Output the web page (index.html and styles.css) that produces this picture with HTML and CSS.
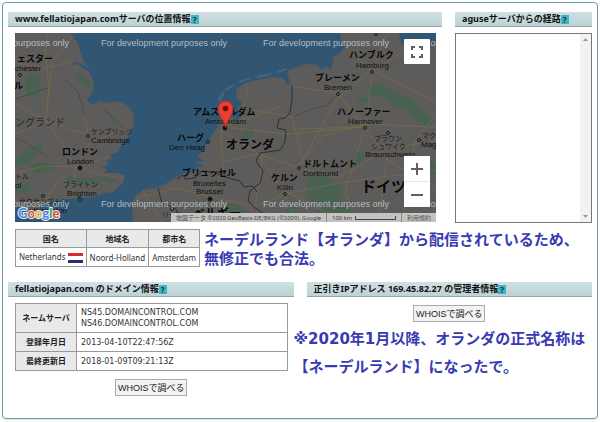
FILE: index.html
```html
<!DOCTYPE html>
<html lang="ja">
<head>
  <meta charset="UTF-8" />
  <title>aguse.jp</title>
  <meta name="viewport" content="width=device-width, initial-scale=1.0" />
  <link rel="stylesheet" href="styles.css">
</head>
<body>
  <main class="frame">

    <!-- Server location + route -->
    <div class="row row-top">
      <section>
        <h2 class="bar">www.fellatiojapan.comサーバの位置情報<a class="help" href="#help">?</a></h2>
        <div class="content">
          <div class="map">
            <svg class="map-art" viewBox="0 0 421 189" preserveAspectRatio="xMidYMid slice">
              <rect class="sea" width="421" height="189" />
              <path class="shoal" d="M203 66l5-8 1 4-4 7zM210 56l8-5 1 2-8 5zM224 48l12-4v2l-11 4zM242 43l14-3v2l-13 3zM262 38l10-3v2l-9 3z" />

              <!-- land -->
              <path class="land" d="M0 0H55L63 10 65 17 67 25 74 36 68 31 60 29 54 32 62 31 71 37 75 40 79 50 78 58 72 67 77 72 85 68 94 70 102 68 112 72 119 82 118 94 112 105 107 110 103 119 95 122 98 126 91 127 94 131 87 135 92 136 89 140 102 140 110 142 108 150 98 159 90 160 78 164 62 165 45 167 36 170 28 172 22 178 12 177 8 173 0 174Z" />
              <path class="land" d="M118 189L117 172 120 163 128 157 145 154 162 144 170 140 178 138 188 139 180 135 189 133 179 129 190 128 182 124 187 118 192 110 202 94 208 77 213 67 218 72 215 82 222 87 228 82 222 77 227 70 221 64 222 56 230 50 242 47 258 44 268 45 272 51 276 52 274 46 272 40 275 36 282 34 292 31 302 32 306 38 311 33 315 37 318 30 318 24 325 20 330 14 326 6 325 0H384L386 10 393 17 402 10 412 13 421 9V189Z" />

              <!-- woods -->
              <g class="woods">
                <path d="M60 39l8 3 8 9 1 7-6-4-9-9zM11 46l7-5 7 4 1 12-7 9-7-4-2-9zM0 128l9-10 14-8 5 2-7 11-11 9-10 2zM14 133l14-4 16 3-11 7-14 1zM48 142l20 4 19-2 6 4-20 4-18-3zM90 143l12 4-8 3zM97 86l5 3-2 5-4-4zM0 153l10-2 8 6-18 4z" />
                <path d="M352 55l14-4 12 8 17 5 9 12 14 8-4 11-11-5-9-12-15-4-9-10-15-1zM228 100l8-5 4 4-6 8-7-1zM292 146l11-5 16 6 8 14-6 10-18 1-12-8zM338 122l9-5 3 8-9 9zM270 178l9-5 5 9-8 5zM300 178l25-6 15 7-18 8zM390 128l16-5 15 8v11l-19-7zM202 176l14-6 17 8-13 9zM342 66l9-2 2 5-8 3z" />
              </g>

              <!-- roads -->
              <g class="roads">
                <path d="M33 0l-3 20 4 33-3 35 18 25 12 22M0 30l30 5 28-7M31 88l-31 13M61 0l-24 28-6 60M0 140l30-7 31 1 27 8 20 3M61 134l-4 31M61 134l14-24 28-12M73 103l-4-27M28 172l12-20 21-18M0 70l31 18 42 14M61 135l33-12" />
                <path d="M121 165l40-10 34 9 45 9 31-12 42-9 53-8 55-6M195 164l13-28-2-40 21-9 41-14M206 98l35 21 27 39 15 31M208 129l34-8 40 13 26-31 42-12 71 3M210 94l63 7 77-7M232 76l45 8 12 48M284 134l38-68 35-29 63 31M357 39l-6 54-29-33-48-7M350 94l23 33 47 29M270 158l57 30M284 135l40 10 49-30 48-7M195 165l-24 24M195 166l26 23M330 13l27 26 15-39M357 39l31-21M350 94l-20 65 14 30M240 173l8-53M302 33l21 28 29 37M373 116l-10 73M128 158l19 31M233 51l-6 37M277 96l73-2M388 189l12-81 21-27" />
              </g>
              <path class="minor" d="M48 45l15 14 7 23M33 55l-33 11M280 83l20-8 12-2 7-10M88 75l20 20M3 105l29 18" />

              <!-- borders -->
              <path class="border" d="M277 52v15l-2 13-5 5-6 1-2 9 9 2-1 12-5 8-20 3-4 8 7 10-3 12-10 8-2 10 7 7 8 5v9M162 146l6-4 2 4 10-1 7-7 12 1 8 4 10 3 8 2 4 6 9-1 4 6M143 155l4 15 14 6 5 13" />

              <!-- place marks -->
              <g class="dots">
                <circle cx="5" cy="42" r="1.5" /><circle cx="73" cy="103" r="1.5" />
                <circle cx="28" cy="163" r="1.5" /><circle cx="65" cy="167" r="1.5" />
                <circle cx="193" cy="109" r="1.5" /><circle cx="357" cy="39" r="1.5" />
                <circle cx="323" cy="61" r="1.5" /><circle cx="350" cy="95" r="1.5" />
                <circle cx="373" cy="100" r="1.5" /><circle cx="404" cy="107" r="1.5" />
                <circle cx="284" cy="135" r="1.5" /><circle cx="270" cy="161" r="1.5" />
                <circle cx="157" cy="176" r="1.5" /><circle cx="361" cy="1" r="1.5" />
                <circle class="capital" cx="65" cy="135" r="2" />
                <circle class="capital" cx="210" cy="95" r="2" />
                <circle class="capital" cx="195" cy="166" r="2" />
              </g>

              <g class="city">
                <text x="2" y="29">ェスター</text>
                <text x="-1" y="56">ル</text>
                <text x="47" y="122">ロンドン</text>
                <text x="178" y="82">アムステルダム</text>
                <text x="162" y="108">ハーグ</text>
                <text x="167" y="143">ブリュッセル</text>
                <text x="334" y="25">ハンブルク</text>
                <text x="300" y="48">ブレーメン</text>
                <text x="322" y="82">ハノーファー</text>
                <text x="288" y="134">ドルトムント</text>
                <text x="256" y="148">ケルン</text>
              </g>
              <g class="town">
                <text x="76" y="101">ケンブリッジ</text>
                <text x="48" y="154">ブライトン</text>
                <text x="4" y="171">サウサンプトン</text>
                <text x="0" y="146">トル</text>
                <text x="359" y="108">ブラウン</text>
                <text x="356" y="116">シュワイク</text>
                <text x="407" y="105">マク</text>
                <text x="147" y="184">リール</text>
              </g>
              <g class="latin">
                <text x="0" y="38">chester</text>
                <text x="76" y="110">Cambridge</text>
                <text x="52" y="131">London</text>
                <text x="52" y="163">Brighton</text>
                <text x="14" y="180">uthampton</text>
                <text x="0" y="155">ol</text>
                <text x="190" y="91">Amsterdam</text>
                <text x="154" y="117">Den Haag</text>
                <text x="178" y="153">Bruxelles</text>
                <text x="181" y="161">Brussel</text>
                <text x="341" y="35">Hamburg</text>
                <text x="309" y="57">Bremen</text>
                <text x="333" y="91">Hannover</text>
                <text x="350" y="124">Braunschweig</text>
                <text x="406" y="114">Mag</text>
                <text x="288" y="143">Dortmund</text>
                <text x="262" y="157">Köln</text>
              </g>
              <text class="region" x="0" y="93">ングランド</text>
              <text class="country" x="211" y="116">オランダ</text>
              <text class="country" x="178" y="185">ベルギー</text>
              <text class="country large" x="346" y="159">ドイツ</text>

              <g class="watermark">
                <text x="-72" y="13">For development purposes only</text>
                <text x="86" y="13">For development purposes only</text>
                <text x="248" y="13">For development purposes only</text>
                <text x="410" y="13">For development purposes only</text>
                <text x="-72" y="174">For development purposes only</text>
                <text x="86" y="174">For development purposes only</text>
                <text x="248" y="174">For development purposes only</text>
                <text x="410" y="174">For development purposes only</text>
              </g>

              <path class="pin" d="M210.500 94.500C209.500 87 203 83 203 75.500a7.500 7.500 0 0 1 15 0C218 83 211.500 87 210.500 94.500Z" />
              <circle class="pin-hole" cx="210.500" cy="75.500" r="2.800" />

              <text class="google" x="3" y="185"><tspan class="g-blue">G</tspan><tspan class="g-red">o</tspan><tspan class="g-yellow">o</tspan><tspan class="g-blue">g</tspan><tspan class="g-green">l</tspan><tspan class="g-red">e</tspan></text>
            </svg>

            <button class="map-btn fullscreen" type="button" aria-label="全画面表示">
              <svg width="12" height="12" viewBox="0 0 12 12"><path d="M1 4V1H4M8 1H11V4M11 8V11H8M4 11H1V8" /></svg>
            </button>
            <div class="zoom">
              <button class="map-btn" type="button" aria-label="拡大">
                <svg width="12" height="12" viewBox="0 0 12 12"><path d="M6 0V12M0 6H12" /></svg>
              </button>
              <button class="map-btn" type="button" aria-label="縮小">
                <svg width="12" height="12" viewBox="0 0 12 12"><path d="M0 6H12" /></svg>
              </button>
            </div>
            <div class="credits">
              <span>地図データ ©2020 GeoBasis-DE/BKG (©2009), Google</span>
              <span class="scale">100 km <i></i></span>
              <a href="#terms">利用規約</a>
            </div>
          </div>

          <div class="place">
            <table class="grid place-table">
              <tr><th>国名</th><th>地域名</th><th>都市名</th></tr>
              <tr>
                <td>Netherlands <span class="flag"></span></td>
                <td>Noord-Holland</td>
                <td>Amsterdam</td>
              </tr>
            </table>
            <p class="note">ネーデルランド【オランダ】から配信されているため、<br />無修正でも合法。</p>
          </div>
        </div>
      </section>

      <section>
        <h2 class="bar"><label for="route">aguseサーバからの経路</label><a class="help" href="#help">?</a></h2>
        <div class="route">
          <textarea id="route" readonly></textarea>
          <div class="track">
            <svg width="5" height="3" viewBox="0 0 5 3"><path d="M0 3L2.500 0 5 3Z" /></svg>
            <svg width="5" height="3" viewBox="0 0 5 3"><path d="M0 0L2.500 3 5 0Z" /></svg>
          </div>
        </div>
      </section>
    </div>

    <!-- Domain + IP owner -->
    <div class="row row-bottom">
      <section>
        <h2 class="bar">fellatiojapan.com のドメイン情報<a class="help" href="#help">?</a></h2>
        <div class="content">
          <table class="grid domain-table">
            <tr><th>ネームサーバ</th><td>NS45.DOMAINCONTROL.COM<br />NS46.DOMAINCONTROL.COM</td></tr>
            <tr><th>登録年月日</th><td>2013-04-10T22:47:56Z</td></tr>
            <tr><th>最終更新日</th><td>2018-01-09T09:21:13Z</td></tr>
          </table>
          <button class="whois" type="button">WHOISで調べる</button>
        </div>
      </section>

      <section>
        <h2 class="bar">正引きIPアドレス 169.45.82.27 の管理者情報<a class="help" href="#help">?</a></h2>
        <button class="whois" type="button">WHOISで調べる</button>
        <p class="note note-loose">※2020年1月以降、オランダの正式名称は<br />【ネーデルランド】になったで。</p>
      </section>
    </div>
  </main>
</body>
</html>
```
FILE: styles.css
```css
* { box-sizing: border-box; }

body {
  margin: 0;
  padding: 2px;
  background-color: #fff;
  color: #333;
  font-family: "DejaVu Sans", "Noto Sans CJK JP", sans-serif;
  font-size: 8px;
}

.frame {
  padding: 9px 5px 22px;
  border: 1px solid #6c9da2;
  border-radius: 4px;
  box-shadow: 0 1px 2px #d5e6e9;
}

.row {
  display: grid;
  column-gap: 13px;
}

.row-top {
  grid-template-columns: minmax(0, 434fr) minmax(0, 137fr);
  margin-bottom: 13px;
}

.row-bottom {
  grid-template-columns: minmax(0, 1fr) minmax(0, 1fr);
}

section {
  display: flex;
  flex-direction: column;
}

.bar {
  display: flex;
  align-items: center;
  height: 15px;
  margin: 0 0 6px;
  padding: 0 7px;
  background: linear-gradient(#d0e0e2, #bcd3d6);
  border-bottom: 1px solid #90a6a9;
  color: #111;
  font-family: "Noto Sans", "Noto Sans CJK JP", sans-serif;
  font-size: 9px;
  font-weight: bold;
  line-height: 14px;
  white-space: pre;
}

.help {
  width: 8px;
  height: 9px;
  background-color: #46b4c0;
  color: #08343c;
  font-size: 8px;
  line-height: 9px;
  text-align: center;
  text-decoration: none;
}

.content {
  padding: 0 6px 0 7px;
}

/* Map */
.map {
  position: relative;
  height: 189px;
  overflow: hidden;
}

.map-art {
  display: block;
  width: 100%;
  height: 100%;
}

.sea { fill: #305673; }
.shoal { fill: #45667b; }
.land { fill: #5d5c5b; }
.woods { fill: #496150; }
.roads { fill: none; stroke: #7d6c46; stroke-width: 1; opacity: 0.7; }
.minor { fill: none; stroke: #4e4b4a; stroke-width: 1; }
.border { fill: none; stroke: #302f2f; stroke-width: 1; }
.dots circle { fill: #666; stroke: #171717; stroke-width: 1; }
.dots .capital { fill: #111; }

.city, .country {
  fill: #080808;
  font-family: "Noto Sans CJK JP", sans-serif;
  font-size: 9px;
  font-weight: bold;
}

.country { font-size: 12px; }
.large { font-size: 15px; }

.town, .region {
  fill: #181818;
  font-family: "Noto Sans CJK JP", sans-serif;
  font-size: 7px;
}

.region { font-size: 10px; fill: #292929; }

.latin {
  fill: #101010;
  font-family: "Liberation Sans", Arial, sans-serif;
  font-size: 8px;
}

.watermark {
  fill: #b4bcc2;
  font-family: "Liberation Sans", Arial, sans-serif;
  font-size: 9px;
}

.pin { fill: #ea3f35; stroke: #b92b26; stroke-width: 1; }
.pin-hole { fill: #6d1010; }

.google {
  font-family: Lato, sans-serif;
  font-size: 13px;
  font-weight: bold;
  stroke: #e9edf1;
  stroke-width: 2;
  paint-order: stroke;
}

.g-blue { fill: #4a83df; }
.g-red { fill: #d9493c; }
.g-yellow { fill: #e8b32c; }
.g-green { fill: #3b9d55; }

.map-btn {
  display: flex;
  align-items: center;
  justify-content: center;
  width: 26px;
  height: 25px;
  padding: 0;
  border: 0;
  border-radius: 1px;
  background-color: #fff;
}

.map-btn path {
  fill: none;
  stroke: #606060;
  stroke-width: 2;
}

.fullscreen {
  position: absolute;
  top: 6px;
  right: 6px;
}

.zoom {
  position: absolute;
  right: 6px;
  bottom: 15px;
  background-color: #fff;
}

.zoom .map-btn + .map-btn {
  height: 26px;
  border-top: 1px solid #e6e6e6;
}

.credits {
  position: absolute;
  right: 0;
  bottom: 0;
  display: flex;
  height: 9px;
  background-color: #c3c3c1;
  color: #444;
  font-family: Roboto, "Noto Sans CJK JP", sans-serif;
  font-size: 6px;
  line-height: 9px;
  white-space: nowrap;
}

.credits > * {
  padding: 0 5px;
}

.credits > * + * {
  border-left: 1px solid #888;
}

.credits a {
  color: #555;
  text-decoration: none;
}

.scale {
  display: flex;
  gap: 3px;
}

.scale i {
  width: 41px;
  height: 4px;
  margin-top: 3px;
  border: 1px solid #444;
  border-top: 0;
}

/* Tables */
.grid {
  border-collapse: collapse;
  line-height: 11px;
}

.grid th, .grid td {
  height: 19px;
  padding: 0 4px;
  border: 1px solid #999;
}

.grid th {
  background-color: #e9e9e9;
  color: #222;
  text-align: center;
}

.place {
  display: flex;
  align-items: flex-start;
  gap: 4px;
  margin-top: 7px;
}

.place-table {
  font-family: "Noto Sans", "Noto Sans CJK JP", sans-serif;
  white-space: nowrap;
}

.place-table th {
  height: 18px;
}

.place-table td {
  padding: 0 3px;
}

.flag {
  display: inline-block;
  width: 15px;
  height: 10px;
  background: linear-gradient(#d92b2d 0 3px, #fff 3px 7px, #262f78 7px);
  vertical-align: middle;
}

.domain-table {
  width: 100%;
}

.domain-table th {
  width: 61px;
  white-space: nowrap;
}

.domain-table tr:first-child td {
  height: 29px;
}

.note {
  margin: 2px 0 0;
  color: #3a39b4;
  font-size: 15px;
  font-weight: bold;
  line-height: 19px;
  white-space: nowrap;
}

/* the remark is wider than its column and runs back over the gap */
.note-loose {
  margin: 3px 0 0 -13px;
  line-height: 28px;
}

.whois {
  display: block;
  align-self: center;
  width: 72px;
  height: 17px;
  margin: 2px auto 0;
  padding: 0;
  border: 1px solid #aaa;
  background-color: #f3f3f3;
  color: #222;
  font-family: "Liberation Sans", "Noto Sans CJK JP", sans-serif;
  font-size: 9px;
  line-height: 14px;
}

.domain-table + .whois {
  margin-top: 8px;
}

/* Route box */
.route {
  display: flex;
  height: 190px;
  border: 1px solid #777;
}

.route textarea {
  flex: 1;
  min-width: 0;
  padding: 2px;
  border: 0;
  outline: 0;
  resize: none;
}

.track {
  display: flex;
  flex-direction: column;
  align-items: center;
  justify-content: space-between;
  width: 11px;
  padding: 4px 0;
  background-color: #f2f2f2;
}

.track path {
  fill: #999;
}
```
